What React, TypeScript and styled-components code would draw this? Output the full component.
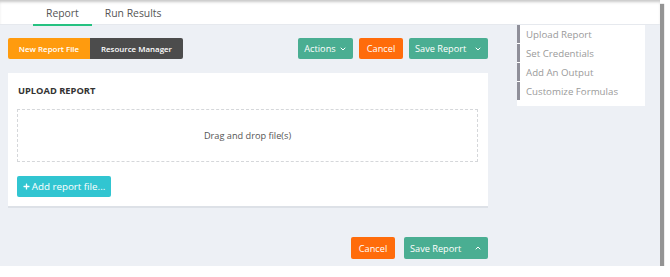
import styled, { createGlobalStyle } from 'styled-components'
import { ChevronDown, ChevronUp } from 'lucide-react'
import { FaPlus } from 'react-icons/fa'

const GlobalStyle = createGlobalStyle`
  html, body {
    margin: 0;
    padding: 0;
    background: #ffffff;
    font-family: "Open Sans", "Liberation Sans", sans-serif;
  }
`

const Frame = styled.div`
  width: 660px;
  height: 266px;
  background-color: #edf0f5;
  box-shadow: 4px 4px 1px rgba(0, 0, 0, 0.42);
  display: flex;
  flex-direction: column;
  overflow: hidden;
`

const Header = styled.div`
  height: 25px;
  flex-shrink: 0;
  background-color: #fff;
  box-shadow: inset 0 3px 3px -1px rgba(0, 0, 0, 0.22);
  border-bottom: 1px solid #e6e9ee;
  box-sizing: border-box;
  display: flex;
  align-items: stretch;
  padding-left: 33px;
`

const Tab = styled.div<{ $active?: boolean }>`
  display: flex;
  align-items: center;
  padding: 2px 13px 0;
  font-size: 10.4px;
  color: #555;
  border-bottom: 2px solid ${({ $active }) => ($active ? '#26c281' : 'transparent')};
  margin-bottom: -2px;
`

const Body = styled.div`
  flex: 1;
  display: flex;
  align-items: flex-start;
  padding-left: 8px;
  gap: 29px;
`

const Main = styled.div`
  width: 480px;
  display: flex;
  flex-direction: column;
  padding-top: 13px;
`

const Toolbar = styled.div`
  display: flex;
  align-items: center;
  justify-content: space-between;
  height: 21px;
`

const Group = styled.div`
  display: flex;
  border-radius: 2px;
  overflow: hidden;
`

const GroupButton = styled.div<{ $bg: string; $w: number }>`
  width: ${({ $w }) => $w}px;
  height: 21px;
  display: flex;
  align-items: center;
  justify-content: center;
  font-size: 7.9px;
  font-weight: 600;
  color: #fff;
  background-color: ${({ $bg }) => $bg};
`

const Actions = styled.div`
  display: flex;
  gap: 6px;
`

const Button = styled.div<{ $bg: string; $w: number; $h?: number }>`
  width: ${({ $w }) => $w}px;
  height: ${({ $h }) => $h ?? 21}px;
  box-sizing: border-box;
  display: flex;
  align-items: center;
  justify-content: center;
  gap: 3px;
  font-size: 9.2px;
  color: #fff;
  background-color: ${({ $bg }) => $bg};
  border-radius: 2px;
`

const SplitButton = styled(Button)`
  justify-content: space-between;
  padding: 0 6px 0 6px;
`

const Card = styled.div`
  margin-top: 14px;
  height: 135px;
  box-sizing: border-box;
  background-color: #fff;
  border-bottom: 2px solid #dde1e7;
  padding: 10px 9px 0;
  display: flex;
  flex-direction: column;
  align-items: flex-start;
`

const Title = styled.div`
  font-size: 9.3px;
  font-weight: 700;
  color: #333;
  height: 15px;
  line-height: 15px;
  margin-left: 1px;
`

const DropZone = styled.div`
  margin-top: 11px;
  width: 461px;
  height: 53px;
  box-sizing: border-box;
  border: 1.5px dashed #d5d7da;
  display: flex;
  align-items: center;
  justify-content: center;
  font-size: 9.2px;
  color: #555;
`

const AddButton = styled(Button)`
  margin-top: 14px;
  font-size: 9.8px;
  gap: 2px;
`

const Footer = styled.div`
  margin-top: 29px;
  display: flex;
  justify-content: flex-end;
  gap: 9px;
`

const SideNav = styled.div`
  width: 128px;
  height: 81px;
  box-sizing: border-box;
  background-color: #fff;
  display: flex;
  flex-direction: column;
  gap: 1px;
`

const NavItem = styled.div`
  height: 18px;
  display: flex;
  align-items: center;
  border-left: 3px solid #8f8f99;
  padding-left: 6px;
  font-size: 9.7px;
  color: #9a9a9a;
`

export default function App() {
  return (
    <>
      <GlobalStyle />
      <Frame>
        <Header>
          <Tab $active>Report</Tab>
          <Tab>Run Results</Tab>
        </Header>
        <Body>
          <Main>
            <Toolbar>
              <Group>
                <GroupButton $bg="#ff9b0e" $w={82}>New Report File</GroupButton>
                <GroupButton $bg="#4c4c4c" $w={93}>Resource Manager</GroupButton>
              </Group>
              <Actions>
                <Button $bg="#4aae92" $w={55}>
                  Actions <ChevronDown size={8} strokeWidth={3} />
                </Button>
                <Button $bg="#ff6c0b" $w={44}>Cancel</Button>
                <SplitButton $bg="#4aae92" $w={79}>
                  Save Report <ChevronDown size={8} strokeWidth={3} />
                </SplitButton>
              </Actions>
            </Toolbar>
            <Card>
              <Title>UPLOAD REPORT</Title>
              <DropZone>Drag and drop file(s)</DropZone>
              <AddButton $bg="#31c5d1" $w={94}>
                <FaPlus size={7} /> Add report file...
              </AddButton>
            </Card>
            <Footer>
              <Button $bg="#ff6c0b" $w={44} $h={22}>Cancel</Button>
              <SplitButton $bg="#4aae92" $w={84} $h={22}>
                Save Report <ChevronUp size={8} strokeWidth={3} />
              </SplitButton>
            </Footer>
          </Main>
          <SideNav>
            <NavItem>Upload Report</NavItem>
            <NavItem>Set Credentials</NavItem>
            <NavItem>Add An Output</NavItem>
            <NavItem>Customize Formulas</NavItem>
          </SideNav>
        </Body>
      </Frame>
    </>
  )
}
